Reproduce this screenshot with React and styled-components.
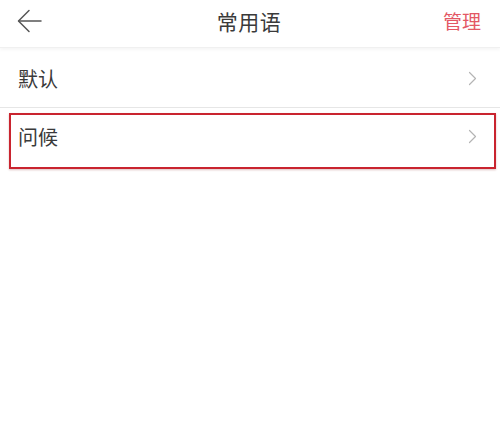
import React from 'react'
import styled, { createGlobalStyle } from 'styled-components'

const GlobalStyle = createGlobalStyle`
  html, body {
    margin: 0;
    padding: 0;
    background: #fff;
    font-family: "Noto Sans CJK SC", "Noto Sans", sans-serif;
  }
`

const items = [
  { id: 1, label: '默认' },
  { id: 2, label: '问候', marked: true },
]

function App() {
  return (
    <Page>
      <GlobalStyle />
      <Header>
        <BackButton>
          <svg width="26" height="24" viewBox="0 0 26 24" fill="none" stroke="#555" strokeWidth="1.5" strokeLinecap="round" strokeLinejoin="round">
            <path d="M24 12H2" />
            <path d="M12 1.5L1.5 12L12 22.5" />
          </svg>
        </BackButton>
        <Title>常用语</Title>
        <Action>管理</Action>
      </Header>
      <List>
        {items.map(item => (
          <Row key={item.id} $marked={item.marked}>
            <Label>{item.label}</Label>
            <svg width="9" height="15" viewBox="0 0 9 15" fill="none" stroke="#b4b4b4" strokeWidth="1.2" strokeLinecap="round" strokeLinejoin="round">
              <path d="M1.5 1.5L7.5 7.5L1.5 13.5" />
            </svg>
          </Row>
        ))}
      </List>
    </Page>
  )
}

const Page = styled.div`
  width: 500px;
  height: 448px;
  background: #fff;
`

const Header = styled.div`
  position: relative;
  height: 48px;
  display: flex;
  align-items: center;
  justify-content: space-between;
  padding: 0 19px 0 17px;
  box-sizing: border-box;
  border-bottom: 1px solid #f0f0f0;
  box-shadow: 0 2px 3px rgba(0, 0, 0, 0.04);
`

const BackButton = styled.div`
  display: flex;
  align-items: center;
  width: 40px;
  margin-top: -5px;
`

const Title = styled.div`
  font-size: 21px;
  color: #3a3a3a;
  letter-spacing: 0.5px;
  margin-top: -6px;
`

const Action = styled.div`
  font-size: 19px;
  color: #e35865;
  width: 40px;
  text-align: right;
  margin-top: -7px;
`

const List = styled.div`
  display: flex;
  flex-direction: column;
  margin-top: 2px;
`

const Row = styled.div`
  position: relative;
  height: 57px;
  display: flex;
  align-items: center;
  justify-content: space-between;
  padding: 0 23px 0 18px;
  border-bottom: ${(props) => (props.$marked ? 'none' : '1px solid #e6e6e6')};

  &::after {
    content: '';
    display: ${(props) => (props.$marked ? 'block' : 'none')};
    position: absolute;
    top: 5px;
    bottom: -4px;
    left: 9px;
    right: 4px;
    border: 2px solid #c9242f;
    box-shadow: 0 1px 2px rgba(120, 0, 0, 0.25);
  }
`

const Label = styled.span`
  font-size: 20px;
  color: #3a3a3a;
`

export default App
